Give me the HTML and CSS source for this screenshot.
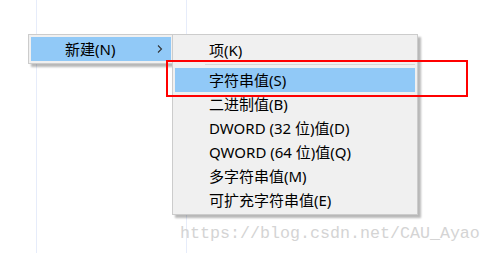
FILE: index.html
```html
<!DOCTYPE html>
<html>
<head>
<meta charset="utf-8">
<link rel="stylesheet" href="styles.css">
</head>
<body>
<div class="canvas">
  <div class="vline vline-a"></div>
  <div class="vline vline-b"></div>

  <div class="menu menu-main">
    <div class="item item-active">
      <span class="label">新建(N)</span>
      <svg class="chev" width="6" height="10" viewBox="0 0 6 10"><path d="M1 1.5 L4.5 5 L1 8.5" fill="none" stroke="#333" stroke-width="1.1"/></svg>
    </div>
  </div>

  <div class="menu menu-sub">
    <div class="item"><span class="label">项(K)</span></div>
    <div class="sep"></div>
    <div class="item item-active"><span class="label">字符串值(S)</span></div>
    <div class="item"><span class="label">二进制值(B)</span></div>
    <div class="item"><span class="label">DWORD (32 位)值(D)</span></div>
    <div class="item"><span class="label">QWORD (64 位)值(Q)</span></div>
    <div class="item"><span class="label">多字符串值(M)</span></div>
    <div class="item"><span class="label">可扩充字符串值(E)</span></div>
  </div>

  <div class="mark"></div>

  <div class="watermark">https://blog.csdn.net/CAU_Ayao</div>
</div>
</body>
</html>
```

FILE: styles.css
```css
html, body {
  margin: 0;
  padding: 0;
  background: #ffffff;
}

.canvas {
  position: relative;
  width: 491px;
  height: 253px;
  overflow: hidden;
  font-family: "Noto Sans", "Noto Sans CJK SC", sans-serif;
  font-size: 15px;
  color: #000;
}

.vline {
  position: absolute;
  top: 0;
  bottom: 0;
  width: 1px;
  background: #e6ecfa;
}
.vline-a { left: 36px; }
.vline-b { left: 186px; }

.menu {
  position: absolute;
  background: #f0f0f0;
  border: 1px solid #cccccc;
  box-shadow: 3px 3px 2px rgba(0, 0, 0, 0.28);
  box-sizing: border-box;
}

.menu-main {
  left: 28px;
  top: 34px;
  width: 150px;
  height: 30px;
  padding: 2px;
  z-index: 1;
}

.menu-main .item {
  display: flex;
  align-items: center;
  justify-content: space-between;
  height: 24px;
  width: 140px;
  padding-left: 34px;
  padding-right: 8px;
  box-sizing: border-box;
}

.chev {
  display: block;
}

.menu-sub {
  left: 172px;
  top: 34px;
  width: 246px;
  height: 181px;
  padding: 3px 2px 2px 2px;
  z-index: 2;
}

.item {
  height: 24px;
  line-height: 24px;
  padding-left: 34px;
  white-space: nowrap;
}

.item-active {
  background: #91c9f7;
}

.label {
  position: relative;
  top: 0px;
}

.sep {
  height: 6px;
  margin-left: 30px;
  display: flex;
  align-items: center;
}
.sep::before {
  content: "";
  display: block;
  width: 100%;
  height: 1px;
  background: #d7d7d7;
  margin-top: -1px;
}

.mark {
  position: absolute;
  left: 166px;
  top: 60px;
  width: 302px;
  height: 37px;
  border: 2px solid #ff0000;
  box-sizing: border-box;
  z-index: 3;
}

.watermark {
  position: absolute;
  left: 180px;
  top: 224px;
  font-family: "Liberation Mono", monospace;
  font-size: 16.67px;
  line-height: 20px;
  color: #d4d4d4;
  white-space: nowrap;
}
```
